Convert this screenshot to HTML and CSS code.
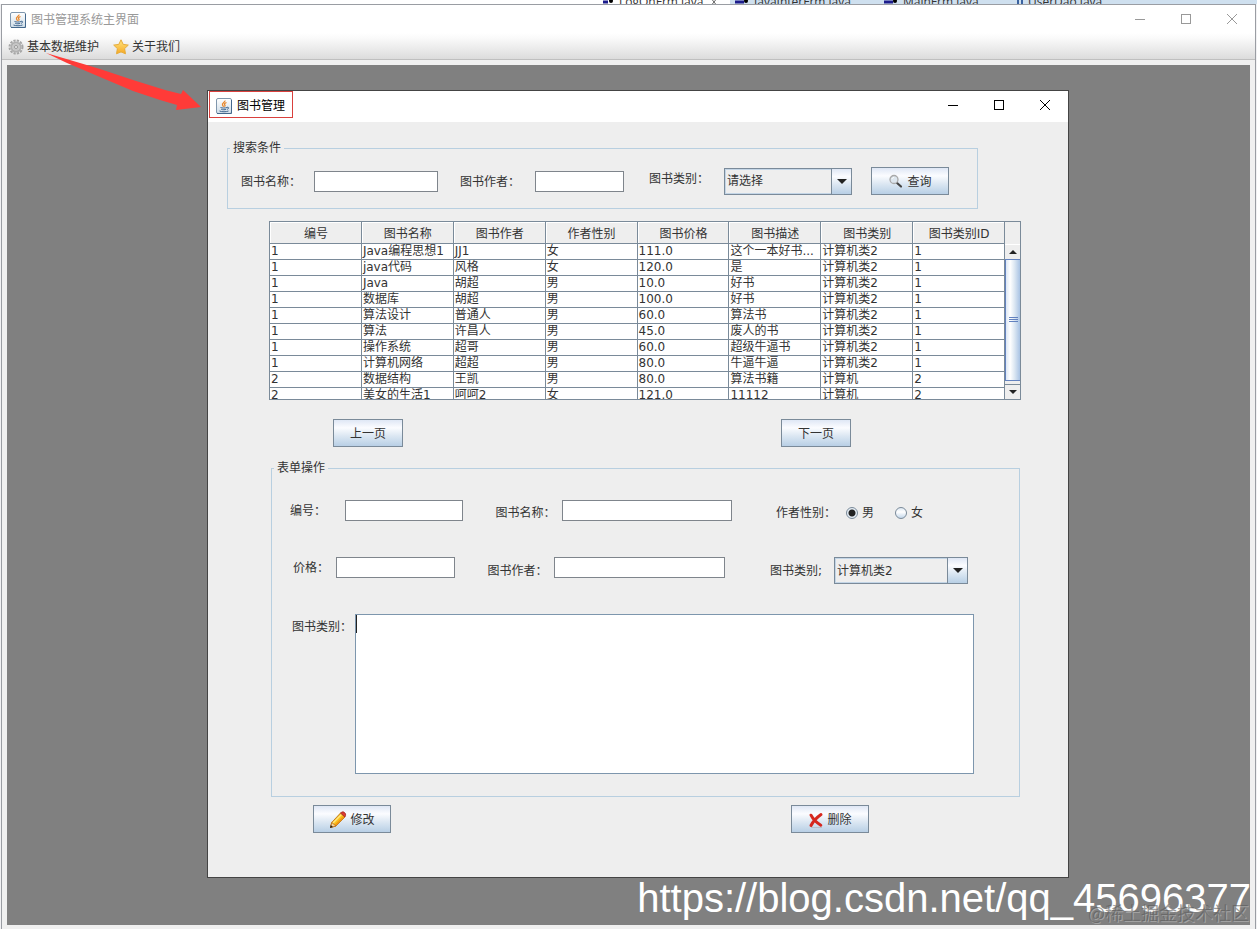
FILE: index.html
```
<!DOCTYPE html>
<html lang="zh-CN">
  <head>
    <meta charset="UTF-8" />
    <meta name="viewport" content="width=device-width, initial-scale=1.0" />
    <title>图书管理系统主界面</title>
    <link rel="stylesheet" href="styles.css" />
  </head>
  <body>
    <!-- shared icons -->
    <svg class="sprite" aria-hidden="true">
      <defs>
        <linearGradient id="javaBg" x1="0" y1="0" x2="0" y2="1">
          <stop offset="0" stop-color="#ffffff" />
          <stop offset="1" stop-color="#cfdde8" />
        </linearGradient>
        <linearGradient id="starBg" x1="0" y1="0" x2="0" y2="1">
          <stop offset="0" stop-color="#ffe680" />
          <stop offset="1" stop-color="#f7a823" />
        </linearGradient>
      </defs>
      <symbol id="java" viewBox="0 0 16 16">
        <rect x="0.5" y="0.5" width="15" height="15" rx="1.5" fill="url(#javaBg)" stroke="#8097ad" />
        <path d="M1 15.5h14.5V2" fill="none" stroke="#44688c" />
        <path d="M9 2.5c.5 1.8-3.500 2.500-2.500 4.500.3.7 1 1 .8 1.800M10.500 4.500C8.500 5.500 8 6 8.800 7c.5.7.2 1.200-.4 1.600" fill="none" stroke="#e8862a" stroke-width="1.300" />
        <path d="M4.500 9.500c1.500.7 5 .7 6.500 0M5.200 11.300c1.500.6 3.800.6 5 0M3.500 13c2.500 1 6.500 1 9 0M11 9.300c2.200-.6 2.200 1.600 0 2" fill="none" stroke="#41678f" />
      </symbol>
      <symbol id="minimize" viewBox="0 0 12 12"><path d="M1 6.500h10" stroke="currentColor" fill="none" /></symbol>
      <symbol id="maximize" viewBox="0 0 12 12"><rect x="1.500" y="1.500" width="9" height="9" stroke="currentColor" fill="none" /></symbol>
      <symbol id="close" viewBox="0 0 12 12"><path d="M1 1l10 10M11 1L1 11" stroke="currentColor" fill="none" /></symbol>
    </svg>

    <div class="editor-tabs">
      <span class="tab tab-active">
        <svg width="12" height="12" viewBox="0 0 12 12"><path d="M1 6h5" stroke="#1c1c8c" stroke-width="3" /><circle cx="9" cy="5" r="2" /></svg>
        LogOnFrm.java
        <svg width="12" height="12" viewBox="0 0 12 12"><path d="M2 1l8 10M10 1L2 11" stroke="#666" /></svg>
      </span>
      <span class="tab">
        <svg width="14" height="12" viewBox="0 0 14 12"><path d="M0 6h9" stroke="#1c1c8c" stroke-width="3" /><circle cx="11" cy="5" r="2" /></svg>
        JavaInterFrm.java
      </span>
      <span class="tab">
        <svg width="14" height="12" viewBox="0 0 14 12"><path d="M0 6h9" stroke="#1c1c8c" stroke-width="3" /><circle cx="11" cy="5" r="2" /></svg>
        MainFrm.java
      </span>
      <span class="tab tab-last">
        <svg width="6" height="12" viewBox="0 0 6 12"><path d="M1 0v12M5 0v12" stroke="#3a62a0" stroke-width="2" /></svg>
        UserDao.java
      </span>
    </div>

    <div class="main-window">
      <header class="title-bar">
        <span class="caption">
          <svg width="16" height="16"><use href="#java" /></svg>
          图书管理系统主界面
        </span>
        <button type="button" class="window-button" aria-label="最小化"><svg width="12" height="12"><use href="#minimize" /></svg></button>
        <button type="button" class="window-button" aria-label="最大化"><svg width="12" height="12"><use href="#maximize" /></svg></button>
        <button type="button" class="window-button" aria-label="关闭"><svg width="12" height="12"><use href="#close" /></svg></button>
      </header>

      <nav class="menu-bar">
        <button type="button" class="menu-item">
          <svg width="16" height="16" viewBox="0 0 16 16">
            <circle cx="8" cy="8" r="6.500" fill="none" stroke="#a6a6a6" stroke-width="2" stroke-dasharray="2.300 1.100" />
            <circle cx="8" cy="8" r="4.600" fill="#ddd" stroke="#b0b0b0" stroke-width="2" />
            <circle cx="8" cy="8" r="3.500" fill="#c6c6c6" />
            <circle cx="8" cy="8" r="1.500" fill="#f2f2f2" stroke="#999" />
          </svg>
          基本数据维护
        </button>
        <button type="button" class="menu-item">
          <svg width="16" height="16" viewBox="0 0 16 16">
            <path d="M8 .8l2.200 4.600 5.100.7-3.700 3.500.9 5.200L8 12.900l-4.500 1.900.9-5.200L.7 6.100l5.100-.7z" fill="url(#starBg)" stroke="#e5ac3c" stroke-linejoin="round" />
          </svg>
          关于我们
        </button>
      </nav>

      <main class="desktop">
        <section class="dialog">
          <header class="title-bar">
            <span class="caption caption-marked">
              <svg width="16" height="16"><use href="#java" /></svg>
              图书管理
            </span>
            <button type="button" class="window-button" aria-label="最小化"><svg width="12" height="12"><use href="#minimize" /></svg></button>
            <button type="button" class="window-button" aria-label="最大化"><svg width="12" height="12"><use href="#maximize" /></svg></button>
            <button type="button" class="window-button" aria-label="关闭"><svg width="12" height="12"><use href="#close" /></svg></button>
          </header>

          <div class="dialog-body">
            <fieldset class="search-box">
              <legend>搜索条件</legend>
              <div class="search-row">
                <label for="searchName" class="search-label-name">图书名称：</label>
                <input type="text" id="searchName" class="search-name" />
                <label for="searchAuthor" class="search-label-author">图书作者：</label>
                <input type="text" id="searchAuthor" class="search-author" />
                <label for="searchType" class="search-label-type">图书类别：</label>
                <div class="combo search-type">
                  <select id="searchType">
                    <option>请选择</option>
                    <option>计算机类2</option>
                    <option>计算机</option>
                  </select>
                </div>
                <button type="button" class="btn btn-icon">
                  <svg width="16" height="16" viewBox="0 0 16 16">
                    <path d="M8.500 8.500l4.500 4" stroke="#444" stroke-width="2.200" stroke-linecap="round" />
                    <circle cx="6" cy="5.500" r="4" fill="#dde6ee" stroke="#a9a9a9" stroke-width="1.300" />
                    <path d="M4 5c.3-1 1-1.500 2-1.500" stroke="#fff" fill="none" />
                  </svg>
                  查询
                </button>
              </div>
            </fieldset>

            <div class="table-pane">
              <table class="book-table">
                <thead>
                  <tr><th>编号</th><th>图书名称</th><th>图书作者</th><th>作者性别</th><th>图书价格</th><th>图书描述</th><th>图书类别</th><th>图书类别ID</th></tr>
                </thead>
                <tbody>
                  <tr><td>1</td><td>Java编程思想1</td><td>JJ1</td><td>女</td><td>111.0</td><td>这个一本好书...</td><td>计算机类2</td><td>1</td></tr>
                  <tr><td>1</td><td>java代码</td><td>风格</td><td>女</td><td>120.0</td><td>是</td><td>计算机类2</td><td>1</td></tr>
                  <tr><td>1</td><td>Java</td><td>胡超</td><td>男</td><td>10.0</td><td>好书</td><td>计算机类2</td><td>1</td></tr>
                  <tr><td>1</td><td>数据库</td><td>胡超</td><td>男</td><td>100.0</td><td>好书</td><td>计算机类2</td><td>1</td></tr>
                  <tr><td>1</td><td>算法设计</td><td>普通人</td><td>男</td><td>60.0</td><td>算法书</td><td>计算机类2</td><td>1</td></tr>
                  <tr><td>1</td><td>算法</td><td>许昌人</td><td>男</td><td>45.0</td><td>废人的书</td><td>计算机类2</td><td>1</td></tr>
                  <tr><td>1</td><td>操作系统</td><td>超哥</td><td>男</td><td>60.0</td><td>超级牛逼书</td><td>计算机类2</td><td>1</td></tr>
                  <tr><td>1</td><td>计算机网络</td><td>超超</td><td>男</td><td>80.0</td><td>牛逼牛逼</td><td>计算机类2</td><td>1</td></tr>
                  <tr><td>2</td><td>数据结构</td><td>王凯</td><td>男</td><td>80.0</td><td>算法书籍</td><td>计算机</td><td>2</td></tr>
                  <tr><td>2</td><td>美女的生活1</td><td>呵呵2</td><td>女</td><td>121.0</td><td>11112</td><td>计算机</td><td>2</td></tr>
                </tbody>
              </table>
              <div class="scroll-bar">
                <button type="button" class="scroll-button" aria-label="向上"><svg width="8" height="4" viewBox="0 0 8 4"><path d="M0 4l4-4 4 4z" fill="#222" /></svg></button>
                <div class="scroll-track">
                  <div class="scroll-thumb">
                    <svg width="9" height="6" viewBox="0 0 9 6"><path d="M0 .5h9M0 2.500h9M0 4.500h9" stroke="#6382bf" /></svg>
                  </div>
                </div>
                <button type="button" class="scroll-button scroll-down" aria-label="向下"><svg width="8" height="4" viewBox="0 0 8 4"><path d="M0 0l4 4 4-4z" fill="#222" /></svg></button>
              </div>
            </div>

            <div class="pager">
              <button type="button" class="btn">上一页</button>
              <button type="button" class="btn">下一页</button>
            </div>

            <fieldset class="form-box">
              <legend>表单操作</legend>
              <div class="form-row form-row-first">
                <label for="bookId" class="label-id">编号：</label>
                <input type="text" id="bookId" class="field-short" />
                <label for="bookName" class="label-middle">图书名称：</label>
                <input type="text" id="bookName" class="field-long" />
                <div class="sex-group" role="radiogroup" aria-labelledby="sexLabel">
                  <span id="sexLabel" class="sex-label">作者性别：</span>
                  <label class="radio"><input type="radio" name="sex" checked />男</label>
                  <label class="radio"><input type="radio" name="sex" />女</label>
                </div>
              </div>
              <div class="form-row form-row-second">
                <label for="price" class="label-price">价格：</label>
                <input type="text" id="price" class="field-short" />
                <label for="author" class="label-middle">图书作者：</label>
                <input type="text" id="author" class="field-long" />
                <div class="type-group">
                  <label for="bookType">图书类别;</label>
                  <div class="combo">
                    <select id="bookType">
                      <option>计算机类2</option>
                      <option>计算机</option>
                    </select>
                  </div>
                </div>
              </div>
              <div class="form-row form-row-desc">
                <label for="bookDesc">图书类别：</label>
                <div class="text-area">
                  <textarea id="bookDesc"></textarea>
                </div>
              </div>
            </fieldset>

            <div class="actions">
              <button type="button" class="btn btn-icon">
                <svg width="18" height="18" viewBox="0 0 18 18">
                  <path d="M1.500 16.500l1.200-5L11.500 2l4.500 4L7 15z" fill="#fbc01c" stroke="#b86a10" stroke-width=".8" />
                  <path d="M6 14.500L15 5.500" stroke="#ee9413" stroke-width="1.500" />
                  <path d="M4 12L12.500 3.500" stroke="#ffe780" stroke-width="1.500" />
                  <path d="M11.500 2L13 1c1.700-.8 4.300 1.500 3.600 3.300L16 6z" fill="#db3a33" stroke="#a3281f" stroke-width=".8" />
                  <path d="M1.500 16.500l1.200-5L7 15z" fill="#f4d7a3" stroke="#b86a10" stroke-width=".8" />
                  <path d="M1 17l.8-3L4 16z" fill="#222" />
                </svg>
                修改
              </button>
              <button type="button" class="btn btn-icon">
                <svg width="16" height="16" viewBox="0 0 16 16">
                  <path d="M3 15.500h11" stroke="#999" opacity=".4" />
                  <path d="M3 3.200c2 4 6.500 8 9.800 10M13 2.500C9.500 5 5 9.500 3 13.500" fill="none" stroke="#d6281f" stroke-width="3" stroke-linecap="round" />
                </svg>
                删除
              </button>
            </div>
          </div>
        </section>
      </main>
    </div>

    <svg class="arrow" width="160" height="62" viewBox="0 0 160 62" aria-hidden="true">
      <path d="M1 1L35 11 55 17 88 28 120 38 136 42 138 38 156 55 131 58 132 53 115 48 88 39 55 25 22 11z" fill="#ff3b38" />
    </svg>
    <div class="watermark">https://blog.csdn.net/qq_45696377</div>
    <div class="watermark-small">@稀土掘金技术社区</div>
  </body>
</html>
```
FILE: styles.css
```
* {
  box-sizing: border-box;
}
body {
  margin: 0;
  min-height: 100vh;
  display: flex;
  flex-direction: column;
  position: relative;
  overflow: hidden;
  background-color: #f1f1f3;
  color: #333;
  font-family: "DejaVu Sans", "Noto Sans CJK SC", sans-serif;
  font-size: 12px;
  line-height: 16px;
}
button,
input,
select,
textarea {
  font: inherit;
  color: inherit;
  margin: 0;
  border-radius: 0;
}
button {
  padding: 0;
  border: none;
  background: none;
}
svg {
  display: block;
  flex: none;
}
.sprite {
  position: absolute;
  width: 0;
  height: 0;
}

/* editor behind the window */
.editor-tabs {
  display: flex;
  align-items: center;
  height: 4px;
  padding-left: 602px;
  overflow: hidden;
  background: linear-gradient(90deg, #fff 730px, #cfe0ef 730px);
  font-family: "Open Sans", sans-serif;
  white-space: nowrap;
}
.tab {
  display: flex;
  align-items: center;
  gap: 5px;
  width: 149px;
  flex: none;
}
.tab-active {
  width: 133px;
}
.tab-last {
  width: auto;
  margin-left: -16px;
}

/* main window */
.main-window {
  flex: 1;
  display: flex;
  flex-direction: column;
  margin: 0 1px;
  border: 1px solid #9a9da3;
  border-bottom: none;
  background-color: #f0f0f0;
}
.title-bar {
  display: flex;
  height: 28px;
  background-color: #fff;
  color: #999;
}
.caption {
  flex: 1;
  display: flex;
  align-items: center;
  gap: 5px;
  padding: 1px 0 0 8px;
}
.window-button {
  display: flex;
  align-items: center;
  justify-content: center;
  width: 46px;
  height: 28px;
}
.menu-bar {
  display: flex;
  gap: 14px;
  height: 27px;
  padding: 1px 0 0 6px;
  border-bottom: 1px solid #bfbfbf;
  background: linear-gradient(#fff, #fafafa 20%, #dcdcdc);
}
.menu-item {
  display: flex;
  align-items: center;
  gap: 3px;
}
.desktop {
  flex: 1;
  position: relative;
  min-height: 830px;
  margin: 5px 5px 4px;
  background-color: #808080;
}

/* book dialog */
.dialog {
  position: absolute;
  top: 25px;
  left: 200px;
  right: 181px;
  border: 1px solid #444;
  background-color: #eee;
}
.dialog .title-bar {
  height: 31px;
  color: #000;
}
.dialog .caption {
  flex: none;
  margin: 0 auto 4px 1px;
  padding: 2px 7px 0 6px;
  border: 1px solid #d9403d;
}
.dialog-body {
  padding: 18px 0 44px;
}
fieldset {
  min-width: 0;
  margin: 0;
  padding: 0;
  border: 1px solid #b8cfe0;
}
legend {
  margin-left: 2px;
  padding: 0 3px;
}
label,
.sex-label {
  flex: none;
  line-height: 22px;
  white-space: nowrap;
}
input[type="text"] {
  min-width: 0;
  height: 21px;
  padding: 0 2px;
  border: 1px solid #7f858c;
  background-color: #fff;
}
.btn {
  display: flex;
  align-items: center;
  justify-content: center;
  gap: 3px;
  width: 70px;
  height: 28px;
  padding-top: 1px;
  flex: none;
  border: 1px solid #7a8a99;
  background: linear-gradient(#dfe7f5, #fbfcff 30%, #dde8f3 60%, #b8cfe5);
}
.btn-icon {
  width: 78px;
}
.combo {
  position: relative;
}
.combo select {
  display: block;
  appearance: none;
  width: 100%;
  height: 27px;
  padding: 0 22px 0 2px;
  border: 1px solid #7a8a99;
  background-color: #eee;
  box-shadow: inset 0 0 0 1px #c3d5e6;
}
.combo::before {
  content: "";
  position: absolute;
  top: 1px;
  right: 1px;
  bottom: 1px;
  width: 19px;
  border-left: 1px solid #7a8a99;
  background: linear-gradient(#dfe7f5, #fbfcff 30%, #dde8f3 60%, #b8cfe5);
  pointer-events: none;
}
.combo::after {
  content: "";
  position: absolute;
  top: 11px;
  right: 5px;
  border: 5px solid transparent;
  border-top-color: #222;
  border-bottom: none;
  pointer-events: none;
}

/* search */
.search-box {
  margin: 0 90px 0 19px;
}
.search-row {
  display: flex;
  align-items: center;
  padding: 11px 28px 13px 13px;
}
.search-row label {
  padding-top: 1px;
}
.search-label-name {
  width: 73px;
}
.search-label-author {
  width: 75px;
  margin-left: 22px;
}
.search-label-type {
  align-self: flex-start;
  width: 75px;
  margin-left: 25px;
}
.search-name {
  flex: 1 1 124px;
}
.search-author {
  flex: 1 1 89px;
}
.search-type {
  flex: 1 1 128px;
  margin-right: 19px;
}

/* table */
.table-pane {
  display: flex;
  align-items: flex-start;
  height: 179px;
  margin: 12px 47px 0 61px;
  overflow: hidden;
  border: 1px solid #7a8a99;
}
.book-table {
  flex: 1;
  width: 100%;
  table-layout: fixed;
  border-collapse: separate;
  border-spacing: 0;
  background-color: #fff;
}
.book-table th,
.book-table td {
  overflow: hidden;
  padding: 0 0 0 1px;
  border-right: 1px solid #7a8a99;
  border-bottom: 1px solid #7a8a99;
  white-space: nowrap;
}
.book-table th {
  height: 22px;
  padding-top: 2px;
  background-color: #eee;
  box-shadow: inset 1px 1px #fff;
  font-weight: normal;
}
.book-table td {
  height: 16px;
  line-height: 15px;
}
.scroll-bar {
  display: flex;
  flex-direction: column;
  flex: none;
  align-self: stretch;
  width: 15px;
  padding-top: 22px;
}
.scroll-button {
  display: flex;
  align-items: center;
  justify-content: center;
  height: 15px;
  border-top: 1px solid #fff;
}
.scroll-down {
  border-top-color: #7a8a99;
}
.scroll-track {
  flex: 1;
  padding-bottom: 3px;
}
.scroll-thumb {
  display: flex;
  align-items: center;
  justify-content: center;
  height: 100%;
  border: 1px solid #6382bf;
  border-right: none;
  background: linear-gradient(90deg, #dde8f5, #fff 30%, #dde8f3 60%, #a9c3e4);
}
.pager {
  display: flex;
  justify-content: space-between;
  margin: 19px 217px 0 125px;
}

/* edit form */
.form-box {
  margin: 13px 48px 0 63px;
  padding-bottom: 22px;
}
.form-row {
  display: flex;
  align-items: center;
}
.form-row > input,
.label-id,
.label-price {
  align-self: flex-start;
}
.form-row-first {
  min-height: 50px;
  padding: 24px 0 0 18px;
}
.form-row-second {
  padding: 31px 0 0 21px;
}
.form-row-desc {
  align-items: flex-start;
  padding: 30px 45px 0 20px;
}
.form-row-desc label {
  width: 63px;
  line-height: 26px;
}
.label-id {
  width: 55px;
}
.label-price {
  width: 43px;
}
.label-middle {
  width: 66px;
  margin-left: 33px;
}
.field-short {
  flex: 1 1 118px;
}
.field-long {
  flex: 1 1 171px;
}
.sex-group {
  display: flex;
  align-items: center;
  flex: none;
  width: 287px;
  padding-left: 44px;
}
.sex-label {
  width: 70px;
}
.type-group {
  display: flex;
  align-items: center;
  flex: none;
  width: 294px;
  padding: 0 51px 0 45px;
}
.type-group label {
  width: 64px;
}
.type-group .combo {
  flex: 1;
}
.radio {
  display: flex;
  align-items: center;
  gap: 4px;
  margin-right: 21px;
}
.radio input {
  appearance: none;
  width: 12px;
  height: 12px;
  border: 1px solid #7a8a99;
  border-radius: 50%;
  background: linear-gradient(#dde8f3, #fff 40%, #c4d7ea);
}
.radio input:checked {
  background: radial-gradient(circle, #222 3px, #e6eef6 4px);
}
.text-area {
  position: relative;
  flex: 1;
}
.text-area textarea {
  display: block;
  width: 100%;
  height: 160px;
  padding: 0 2px;
  border: 1px solid #7d96ad;
  resize: none;
}
.text-area::before {
  content: "";
  position: absolute;
  top: 1px;
  left: 1px;
  width: 1px;
  height: 18px;
  background-color: #222;
}
.actions {
  display: flex;
  justify-content: space-between;
  margin: 8px 199px 0 105px;
}

/* overlays */
.arrow {
  position: absolute;
  top: 52px;
  left: 45px;
  pointer-events: none;
}
.watermark {
  position: absolute;
  right: 6px;
  bottom: 8px;
  color: #fff;
  font-family: "Liberation Sans", sans-serif;
  font-size: 40px;
  line-height: 46px;
  pointer-events: none;
}
.watermark-small {
  position: absolute;
  right: 8px;
  bottom: 4px;
  color: rgba(90, 90, 90, 0.6);
  font-family: "Noto Sans CJK SC", sans-serif;
  font-size: 18px;
  line-height: 26px;
  text-shadow: 1px 1px rgba(220, 220, 220, 0.4);
  pointer-events: none;
}
```
